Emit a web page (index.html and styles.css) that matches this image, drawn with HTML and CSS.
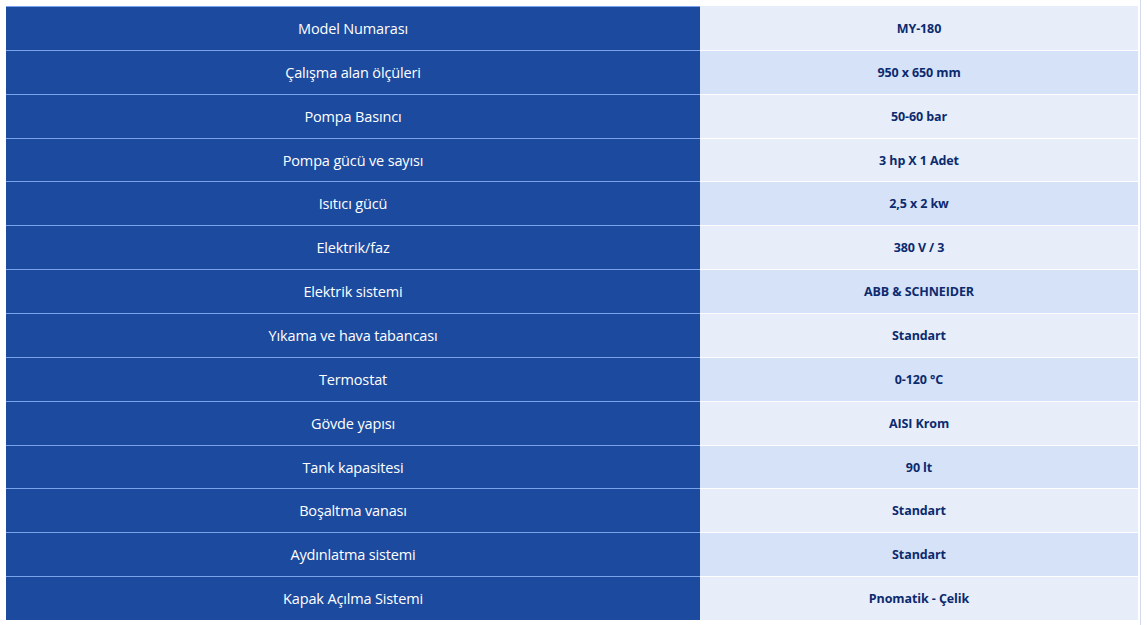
FILE: index.html
```html
<!DOCTYPE html>
<html lang="tr">
<head>
<meta charset="utf-8">
<title>Teknik Özellikler</title>
<link rel="stylesheet" href="styles.css">
</head>
<body>
<div class="frame">
  <div class="specs">
    <div class="row"><div class="key">Model Numarası</div><div class="val">MY-180</div></div>
    <div class="row shade"><div class="key">Çalışma alan ölçüleri</div><div class="val">950 x 650 mm</div></div>
    <div class="row"><div class="key">Pompa Basıncı</div><div class="val">50-60 bar</div></div>
    <div class="row"><div class="key">Pompa gücü ve sayısı</div><div class="val">3 hp X 1 Adet</div></div>
    <div class="row shade"><div class="key">Isıtıcı gücü</div><div class="val">2,5 x 2 kw</div></div>
    <div class="row"><div class="key">Elektrik/faz</div><div class="val">380 V / 3</div></div>
    <div class="row shade"><div class="key">Elektrik sistemi</div><div class="val">ABB &amp; SCHNEIDER</div></div>
    <div class="row"><div class="key">Yıkama ve hava tabancası</div><div class="val">Standart</div></div>
    <div class="row shade"><div class="key">Termostat</div><div class="val">0-120 °C</div></div>
    <div class="row"><div class="key">Gövde yapısı</div><div class="val">AISI Krom</div></div>
    <div class="row shade"><div class="key">Tank kapasitesi</div><div class="val">90 lt</div></div>
    <div class="row"><div class="key">Boşaltma vanası</div><div class="val">Standart</div></div>
    <div class="row shade"><div class="key">Aydınlatma sistemi</div><div class="val">Standart</div></div>
    <div class="row"><div class="key">Kapak Açılma Sistemi</div><div class="val">Pnomatik - Çelik</div></div>
  </div>
</div>
</body>
</html>
```

FILE: styles.css
```css
html, body {
  margin: 0;
  padding: 0;
  background: #ffffff;
}
body {
  font-family: "Open Sans", "Noto Sans", sans-serif;
}
.frame {
  width: 1133px;
  height: 619px;
  padding: 6px 1px 0 6px;
  border-right: 1px solid #d3dbeb;
}
.specs {
  display: flex;
  flex-direction: column;
}
.row {
  display: grid;
  grid-template-columns: 694px 438px;
  height: 43.86px;
}
.key {
  background: #1c4a9e;
  border-top: 1px solid #7ba3ec;
  color: #ffffff;
  font-size: 14.5px;
  display: flex;
  align-items: center;
  justify-content: center;
  letter-spacing: -0.15px;
}
.val {
  background: #e7eefa;
  border-top: 1px solid #ffffff;
  color: #0c2a6e;
  font-size: 12.5px;
  font-weight: 700;
  display: flex;
  align-items: center;
  justify-content: center;
  letter-spacing: -0.1px;
}
.row.shade .val { background: #d6e2f8; }
.row:first-child .val { border-top-color: #e7eefa; }
```
